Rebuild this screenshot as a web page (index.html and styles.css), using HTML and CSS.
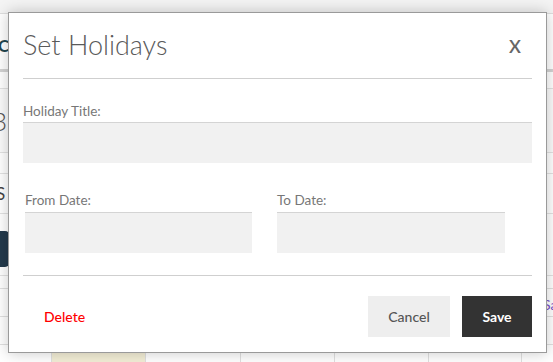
FILE: index.html
```html
<!DOCTYPE html>
<html>
<head>
<meta charset="utf-8">
<link rel="stylesheet" href="styles.css">
</head>
<body>
<div class="page">
  <div class="topbar"></div>
  <div class="titlebar"><span class="brand">Co</span></div>
  <div class="tabline"></div>
  <div class="row r1"></div>
  <div class="row r2"><span class="big">3</span></div>
  <div class="row r3"></div>
  <div class="row r4"><span class="mid">S</span></div>
  <div class="row r5"><span class="navbtn"></span></div>
  <div class="spacer"></div>
  <div class="table">
    <div class="cell"></div><div class="cell"></div><div class="cell"></div><div class="cell"></div><div class="cell"></div><div class="cell"></div><div class="cell last"><span class="purple">Sat</span></div>
    <div class="cell"></div><div class="cell"></div><div class="cell"></div><div class="cell"></div><div class="cell"></div><div class="cell"></div><div class="cell last"></div>
    <div class="cell"></div><div class="cell yellow"></div><div class="cell"></div><div class="cell"></div><div class="cell"></div><div class="cell"></div><div class="cell last"></div>
  </div>
</div>

<div class="modal">
  <div class="modal-header">
    <h2 class="modal-title">Set Holidays</h2>
    <span class="close">X</span>
  </div>
  <div class="modal-body">
    <div class="field">
      <label class="label">Holiday Title:</label>
      <div class="input"></div>
    </div>
    <div class="date-row">
      <div class="field">
        <label class="label">From Date:</label>
        <div class="input"></div>
      </div>
      <div class="field">
        <label class="label">To Date:</label>
        <div class="input"></div>
      </div>
    </div>
  </div>
  <div class="modal-footer">
    <span class="delete">Delete</span>
    <div class="actions">
      <span class="btn cancel">Cancel</span>
      <span class="btn save">Save</span>
    </div>
  </div>
</div>
</body>
</html>
```
FILE: styles.css
```css
* { box-sizing: border-box; }
html, body { margin: 0; padding: 0; }
body {
  width: 553px;
  height: 362px;
  overflow: hidden;
  background: #fff;
  font-family: "Lato", "Liberation Sans", sans-serif;
  position: relative;
}

/* background page */
.page { width: 553px; }
.topbar { height: 14px; background: #f4f4f4; border-bottom: 1px solid #dedede; }
.titlebar { height: 55px; padding: 21px 0 0 0; }
.brand { font-size: 17px; font-weight: 700; color: #1f4650; margin-left: -2px; }
.tabline { height: 3px; background: #d3d3d3; }
.row { border-bottom: 1px solid #e2e2e2; }
.r1 { height: 17px; }
.r2 { height: 64px; padding-top: 16px; background: #fbfbfb; }
.big { font-size: 26px; font-weight: 300; color: #555; margin-left: -8px; }
.r3 { height: 21px; }
.r4 { height: 40px; padding-top: 9px; }
.mid { font-size: 17px; color: #444; margin-left: -4px; }
.r5 { height: 62px; padding-top: 17px; }
.navbtn { display: block; width: 40px; height: 36px; margin-left: -30px; background: #243a4c; border-radius: 5px; }
.spacer { height: 12px; }
.table {
  display: grid;
  grid-template-columns: 52px 94px 95px 94px 94px 93px 31px;
  grid-auto-rows: 28px;
  border-top: 1px solid #e0e0e0;
}
.cell { border-right: 1px solid #e0e0e0; border-bottom: 1px solid #e0e0e0; }
.cell.last { border-right: none; padding: 5px 0 0 21px; }
.cell.yellow { background: #f3eed6; }
.purple { font-size: 14px; color: #7a4fc9; }

/* modal */
.modal {
  position: absolute;
  left: 8px;
  top: 12px;
  width: 539px;
  height: 341px;
  background: #fff;
  border: 1px solid #9a9a9a;
  box-shadow: 0 0 14px rgba(0, 0, 0, 0.22);
  padding: 0 14px 0 14px;
  display: flex;
  flex-direction: column;
}
.modal-header {
  height: 66px;
  border-bottom: 1px solid #cfcfcf;
  display: flex;
  justify-content: space-between;
  align-items: center;
  padding-bottom: 2px;
}
.modal-title {
  margin: 0;
  font-size: 27px;
  font-weight: 300;
  color: #5a5a5a;
  line-height: 32px;
}
.close {
  font-size: 18px;
  font-weight: 600;
  color: #666;
  margin-right: 11px;
  margin-top: 2px;
}
.modal-body { padding-top: 24px; }
.field { display: flex; flex-direction: column; }
.label {
  font-size: 13.5px;
  line-height: 16px;
  color: #777;
  margin-bottom: 3px;
}
.input {
  height: 41px;
  background: #f1f1f1;
  border-top: 1px solid #d4d4d4;
}
.date-row {
  display: grid;
  grid-template-columns: 227px 228px;
  column-gap: 25px;
  padding-left: 2px;
  margin-top: 29px;
}
.date-row .label { margin-bottom: 4px; }
.modal-footer {
  margin-top: 22px;
  border-top: 1px solid #cfcfcf;
  padding-top: 20px;
  display: flex;
  justify-content: space-between;
  align-items: center;
}
.delete {
  font-size: 14px;
  font-weight: 500;
  color: #ff0000;
  margin-left: 21px;
}
.actions { display: flex; gap: 12px; }
.btn {
  height: 41px;
  display: flex;
  align-items: center;
  justify-content: center;
  font-size: 14px;
}
.cancel { width: 82px; background: #eeeeee; color: #555; font-weight: 500; }
.save { width: 70px; background: #333333; color: #fff; font-weight: 700; }
```
